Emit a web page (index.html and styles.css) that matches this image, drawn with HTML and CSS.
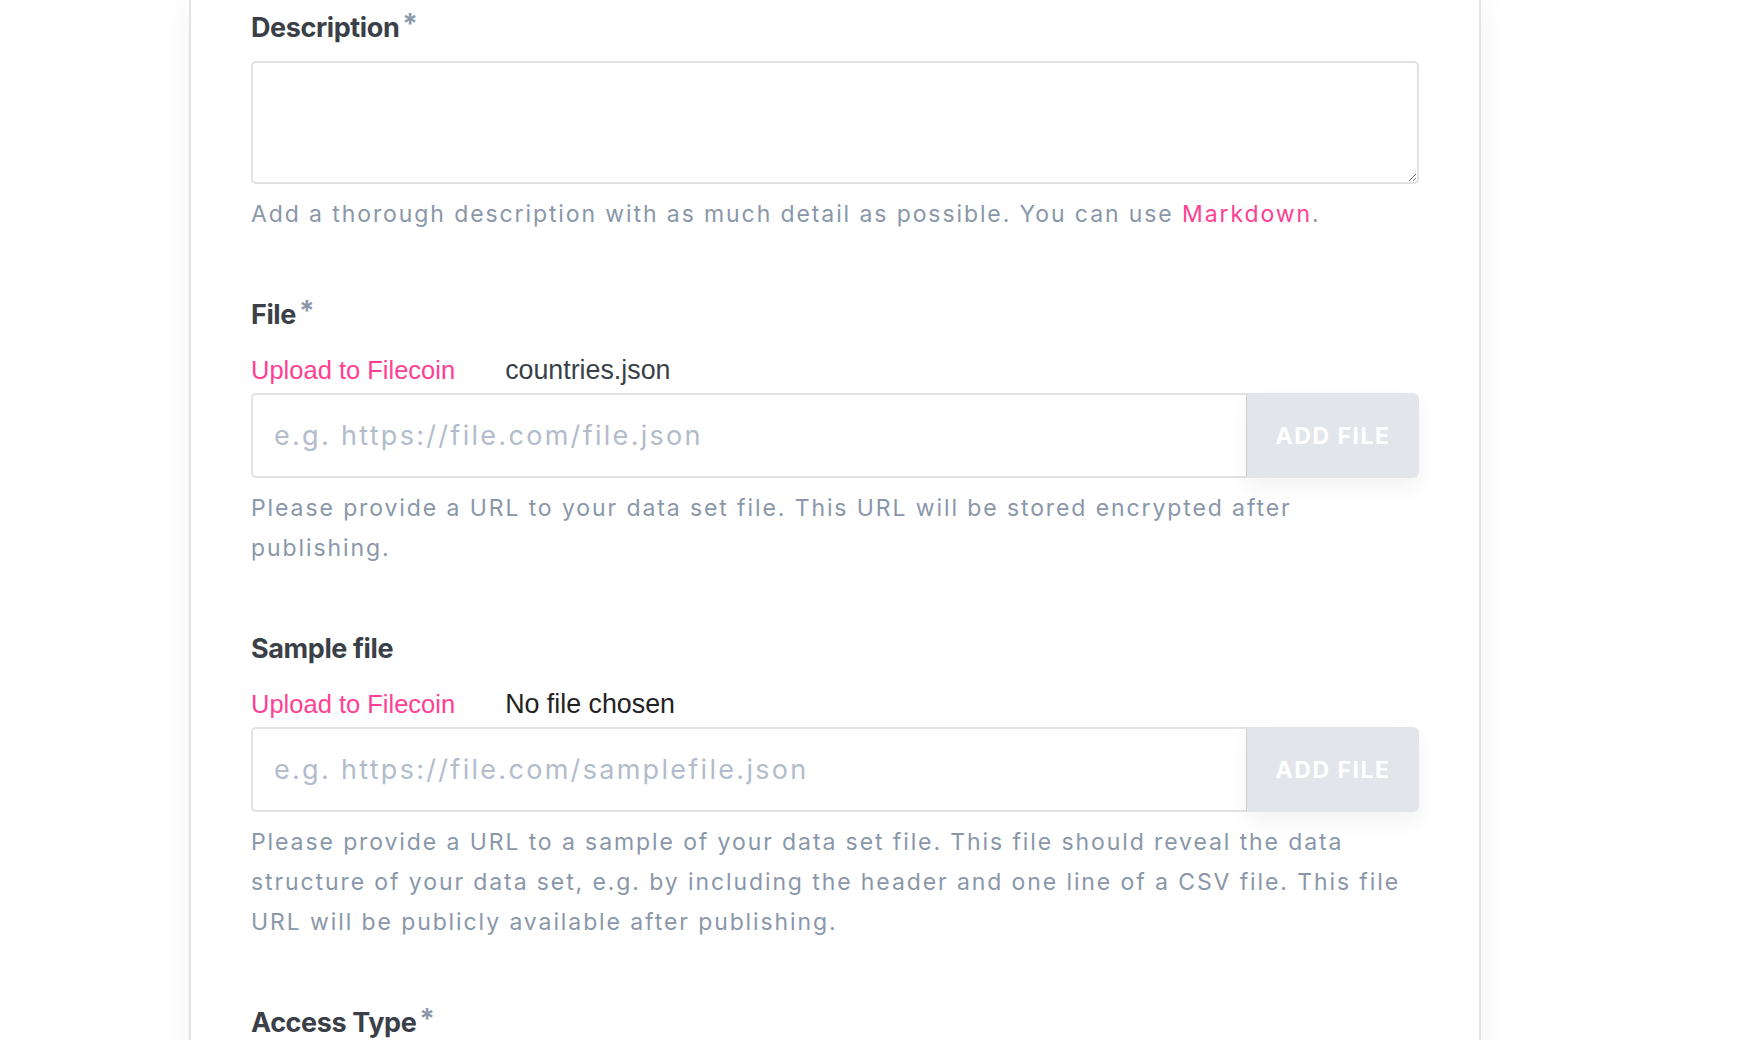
FILE: index.html
```html
<!DOCTYPE html>
<html lang="en">
<head>
<meta charset="utf-8">
<title>Publish data set</title>
<link rel="stylesheet" href="styles.css">
</head>
<body>
<main class="card">
  <section class="field">
    <label class="label" for="desc">Description<span class="req">*</span></label>
    <textarea id="desc" class="textarea"></textarea>
    <p class="help">Add a thorough description with as much detail as possible. You can use <a class="link" href="#">Markdown</a>.</p>
  </section>

  <section class="field">
    <div class="label">File<span class="req">*</span></div>
    <div class="upload-row">
      <span class="upload-btn">Upload to Filecoin</span>
      <span class="file-name">countries.json</span>
    </div>
    <div class="input-group">
      <input class="input" type="text" placeholder="e.g. https://file.com/file.json">
      <button class="add-btn" type="button">ADD FILE</button>
    </div>
    <p class="help">Please provide a URL to your data set file. This URL will be stored encrypted after publishing.</p>
  </section>

  <section class="field">
    <div class="label">Sample file</div>
    <div class="upload-row">
      <span class="upload-btn">Upload to Filecoin</span>
      <span class="file-name none">No file chosen</span>
    </div>
    <div class="input-group">
      <input class="input" type="text" placeholder="e.g. https://file.com/samplefile.json">
      <button class="add-btn" type="button">ADD FILE</button>
    </div>
    <p class="help">Please provide a URL to a sample of your data set file. This file should reveal the data structure of your data set, e.g. by including the header and one line of a CSV file. This file URL will be publicly available after publishing.</p>
  </section>

  <section class="field">
    <div class="label">Access Type<span class="req">*</span></div>
  </section>
</main>
</body>
</html>
```

FILE: styles.css
```css
* { box-sizing: border-box; }

html, body {
  margin: 0;
  padding: 0;
  background: #ffffff;
  overflow: hidden;
}

body {
  font-family: Inter, "Noto Sans", sans-serif;
  color: #3a3f48;
}

.card {
  margin-left: 189px;
  width: 1292px;
  min-height: 1100px;
  padding: 10px 60px 0 60px;
  background: #ffffff;
  border-left: 2px solid #e3e3e3;
  border-right: 2px solid #e3e3e3;
  box-shadow: 0 0 34px rgba(0, 0, 0, 0.05);
}

.field {
  margin-bottom: 63px;
}

.label {
  display: block;
  font-family: Inter, sans-serif;
  font-weight: 700;
  font-size: 27px;
  line-height: 36px;
  letter-spacing: -0.4px;
  color: #3a3f48;
  margin-bottom: 15px;
}

.req {
  display: inline-block;
  margin-left: 3px;
  font-size: 28px;
  font-weight: 700;
  line-height: 20px;
  vertical-align: 3px;
  color: #8b98a9;
  letter-spacing: 0;
}

.textarea {
  display: block;
  width: 100%;
  height: 123px;
  border: 2px solid #e2e2e2;
  border-radius: 5px;
  background: #fff;
  resize: vertical;
  font-family: Inter, sans-serif;
  font-size: 24px;
  outline: none;
}

.help {
  margin: 10px 0 0 0;
  font-family: Inter, sans-serif;
  font-weight: 400;
  font-size: 23px;
  line-height: 40px;
  letter-spacing: 1.9px;
  color: #8a97a9;
}

.link {
  color: #ff4092;
  text-decoration: none;
}

.upload-row {
  display: flex;
  align-items: center;
  gap: 50px;
  height: 44px;
  font-family: "Liberation Sans", Arial, sans-serif;
  font-size: 25.5px;
  margin-bottom: 1px;
}

.upload-btn {
  color: #ff4092;
}

.file-name {
  font-size: 26.8px;
  color: #3a3f48;
}

.file-name.none {
  color: #222222;
}

.input-group {
  display: flex;
  height: 85px;
}

.input {
  flex: 1;
  min-width: 0;
  height: 100%;
  border: 2px solid #e2e2e2;
  border-right: 1px solid #cfd2d6;
  border-radius: 5px 0 0 5px;
  padding: 0 21px;
  font-family: Inter, sans-serif;
  font-size: 27px;
  letter-spacing: 2.3px;
  color: #3a3f48;
  background: #fff;
  outline: none;
}

.input::placeholder {
  color: #b3bccb;
  opacity: 1;
}

.add-btn {
  width: 172px;
  height: 100%;
  border: none;
  border-radius: 0 6px 6px 0;
  background: #e2e5ea;
  color: #ffffff;
  font-family: Inter, sans-serif;
  font-weight: 700;
  font-size: 23px;
  letter-spacing: 1.5px;
  box-shadow: 0 10px 22px rgba(0, 0, 0, 0.05);
  cursor: pointer;
}
```
